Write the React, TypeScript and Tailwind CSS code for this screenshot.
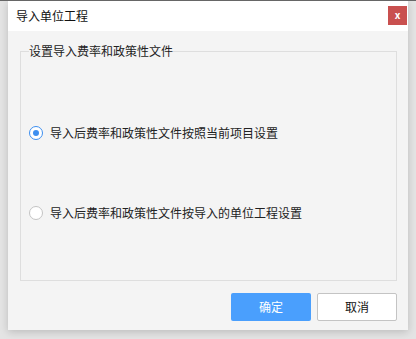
import React, { useState } from 'react';

const FONT = '"Noto Sans CJK SC", "Liberation Sans", sans-serif';

const options = [
  { id: 'current', label: '导入后费率和政策性文件按照当前项目设置' },
  { id: 'unit', label: '导入后费率和政策性文件按导入的单位工程设置' },
];

const Radio: React.FC<{ checked: boolean; label: string; onClick: () => void }> = ({ checked, label, onClick }) => (
  <label className="flex items-center gap-[7px] cursor-pointer" onClick={onClick}>
    <span
      className={
        checked
          ? 'w-[14px] h-[14px] rounded-full border border-[#3d8ff0] bg-white flex items-center justify-center'
          : 'w-[14px] h-[14px] rounded-full border border-[#c4c4c4] bg-white'
      }
    >
      {checked && <span className="w-[6px] h-[6px] rounded-full bg-[#3d8ff0]" />}
    </span>
    <span className="text-[12px] text-[#222]">{label}</span>
  </label>
);

export default function App() {
  const [value, setValue] = useState('current');

  return (
    <div className="w-[416px] h-[339px] bg-[#e4e4e4] border-t border-[#666] overflow-hidden" style={{ fontFamily: FONT }}>
      <div className="ml-[8px] w-[400px] h-[329px] bg-[#f4f4f4] flex flex-col shadow-[0_2px_8px_rgba(0,0,0,0.18)]">
        {/* title bar */}
        <div className="h-[30px] bg-white flex items-center justify-between pl-[8px] pr-[1px]">
          <span className="text-[12px] text-[#111]">导入单位工程</span>
          <button className="w-[19px] h-[19px] mt-[-2px] bg-[#c9504f] text-white text-[10px] font-bold leading-none flex items-center justify-center">
            x
          </button>
        </div>

        {/* body */}
        <div className="flex-1 flex flex-col px-[12px] pr-[11px]">
          <fieldset className="mt-[13px] h-[237px] border border-[#dedede] px-[8px] pt-0 pb-0 m-0 min-w-0">
            <legend className="px-0 text-[12px] text-[#222] leading-[14px]">设置导入费率和政策性文件</legend>
            <div className="flex flex-col gap-[62px] pt-[66px]">
              {options.map(o => (
                <Radio key={o.id} checked={value === o.id} label={o.label} onClick={() => setValue(o.id)} />
              ))}
            </div>
          </fieldset>

          <div className="flex justify-end gap-[6px] mt-[12px]">
            <button className="w-[80px] h-[28px] rounded-[2px] bg-[#4a9ffd] text-white text-[12px]">确定</button>
            <button className="w-[80px] h-[28px] rounded-[2px] bg-white border border-[#c4c4c4] text-[#111] text-[12px]">取消</button>
          </div>
        </div>
      </div>
    </div>
  );
}
